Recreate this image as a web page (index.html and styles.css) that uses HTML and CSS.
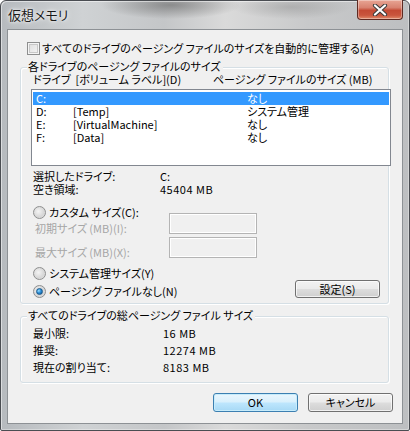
FILE: index.html
```html
<!DOCTYPE html>
<html lang="ja">
<head>
<meta charset="utf-8">
<link rel="stylesheet" href="styles.css">
</head>
<body>
<div class="window">
  <div class="titlebar">
    <span class="title">仮想メモリ</span>
    <div class="close">
      <svg width="16" height="12" viewBox="0 0 16 12"><path d="M3 1.5 L13 10.5 M13 1.5 L3 10.5" stroke="#3b3b3b" stroke-width="4.2" stroke-linecap="round"/><path d="M3 1.5 L13 10.5 M13 1.5 L3 10.5" stroke="#ffffff" stroke-width="2.2" stroke-linecap="round"/></svg>
    </div>
  </div>
  <div class="client">
    <div class="check-row"><span class="checkbox"></span><span>すべてのドライブのページング ファイルのサイズを自動的に管理する(A)</span></div>

    <div class="group g1">
      <span class="legend">各ドライブのページング ファイルのサイズ</span>
      <div class="list-head"><span class="col1">ドライブ&nbsp;&nbsp;[ボリューム ラベル](D)</span><span>ページング ファイルのサイズ (MB)</span></div>
      <div class="listbox">
        <div class="lrow sel"><span class="c1">C:</span><span class="c2"></span><span>なし</span></div>
        <div class="lrow"><span class="c1">D:</span><span class="c2">[Temp]</span><span>システム管理</span></div>
        <div class="lrow"><span class="c1">E:</span><span class="c2">[VirtualMachine]</span><span>なし</span></div>
        <div class="lrow"><span class="c1">F:</span><span class="c2">[Data]</span><span>なし</span></div>
      </div>
      <div class="info">
        <span>選択したドライブ:</span><span>C:</span>
        <span>空き領域:</span><span class="num">45404 MB</span>
      </div>
      <div class="custom">
        <div class="custom-left">
          <div class="radio-row"><span class="radio"></span><span>カスタム サイズ(C):</span></div>
          <div class="dis l1">初期サイズ (MB)(I):</div>
          <div class="dis l2">最大サイズ (MB)(X):</div>
        </div>
        <div class="custom-right">
          <div class="tbox"></div>
          <div class="tbox"></div>
        </div>
      </div>
      <div class="radio-row sys"><span class="radio"></span><span>システム管理サイズ(Y)</span></div>
      <div class="none-row">
        <div class="radio-row"><span class="radio on"></span><span>ページング ファイルなし(N)</span></div>
        <div class="btn set">設定(S)</div>
      </div>
    </div>

    <div class="group g2">
      <span class="legend">すべてのドライブの総ページング ファイル サイズ</span>
      <div class="totals">
        <span>最小限:</span><span class="num">16 MB</span>
        <span>推奨:</span><span class="num">12274 MB</span>
        <span>現在の割り当て:</span><span class="num">8183 MB</span>
      </div>
    </div>

    <div class="buttons">
      <div class="btn ok">OK</div>
      <div class="btn">キャンセル</div>
    </div>
  </div>
</div>
</body>
</html>
```

FILE: styles.css
```css
* { box-sizing: border-box; }
html, body { margin: 0; padding: 0; }
body {
  width: 410px; height: 431px; overflow: hidden;
  font-family: "Noto Sans CJK JP", "Noto Sans", sans-serif;
  font-size: 11px; line-height: 13px; color: #000;
  font-feature-settings: "palt";
  white-space: nowrap;
}
.window {
  width: 410px; height: 431px;
  border: 1px solid #4a4d52;
  border-radius: 6px 6px 2px 2px;
  padding: 0 6px 6px 6px;
  background:
    radial-gradient(ellipse 70px 14px at 170px 4px, rgba(90,90,90,0.55), rgba(90,90,90,0) 100%),
    radial-gradient(ellipse 60px 12px at 290px 6px, rgba(120,120,120,0.35), rgba(120,120,120,0) 100%),
    linear-gradient(to right, #b6babe 0%, #cfd2d4 20%, #c4c6c8 40%, #dadada 55%, #c8c9ca 75%, #bdbfc1 100%);
  display: flex; flex-direction: column;
  box-shadow: inset 1px 1px 0 rgba(255,255,255,0.5), inset -1px -1px 0 rgba(255,255,255,0.35);
}
.titlebar {
  height: 28px; flex: none;
  display: flex; justify-content: space-between; align-items: flex-start;
}
.title {
  margin: 6px 0 0 1px;
  font-size: 13px; line-height: 16px; color: #1a1a1a;
  text-shadow: 0 0 6px #fff, 0 0 3px #fff;
}
.close {
  margin-top: -1px;
  width: 46px; height: 20px;
  border: 1px solid #5e2a22;
  border-top: none;
  border-radius: 0 0 4px 4px;
  background: linear-gradient(to bottom, #e8a594 0%, #d88270 40%, #c44a34 55%, #c9553d 80%, #e08a6a 100%);
  box-shadow: inset 0 0 0 1px rgba(255,255,255,0.35);
  display: flex; align-items: center; justify-content: center;
}
.client {
  flex: 1;
  border: 1px solid #8d9195;
  background: #f0f0f0;
  display: flex; flex-direction: column;
  align-items: flex-start;
}
.check-row {
  margin: 12px 0 0 19px;
  display: flex; align-items: center; gap: 2px; height: 13px;
}
.checkbox {
  width: 13px; height: 13px; flex: none;
  border: 1px solid #8e8f8f;
  background: linear-gradient(135deg, #dcdcdc, #f6f6f6);
  box-shadow: inset 0 0 0 1px #f4f4f4, inset 0 0 0 2px #c8c8c8;
}
.group {
  position: relative;
  margin-left: 12px;
  width: 369px;
  border: 1px solid #d5dfe5;
  border-radius: 3px;
  box-shadow: inset 1px 1px 0 #fff, 1px 1px 0 #fff;
}
.legend {
  position: absolute; top: -8px; left: 6px;
  padding: 0 2px 0 1px;
  background: #f0f0f0;
  line-height: 13px;
}
.g1 { margin-top: 12px; padding: 5px 0 5px 0; }
.g2 { margin-top: 12px; padding: 10px 0 8px 0; }
.list-head { display: flex; padding-left: 12px; height: 13px; }
.list-head .col1 { width: 180px; }
.listbox {
  margin: 3px 0 0 10px;
  width: 360px; height: 77px;
  border: 1px solid #828790;
  background: #fff;
  padding: 2px 1px 0 1px;
}
.lrow { display: flex; height: 13px; padding-left: 3px; }
.lrow .c1 { width: 37px; }
.lrow .c2 { width: 174px; }
.lrow.sel { background: #3399ff; color: #fff; }
.info {
  margin: 4px 0 0 12px;
  display: grid; grid-template-columns: 127px auto;
}
.num { letter-spacing: 0.5px; }
.custom { display: flex; margin: 10px 0 0 12px; }
.custom-left { width: 136px; }
.custom-right { display: flex; flex-direction: column; gap: 3px; margin-top: 7px; }
.tbox {
  width: 88px; height: 21px;
  border: 1px solid #b4b4b4;
  box-shadow: inset 0 0 0 1px #fff;
  background: #f0f0f0;
}
.radio-row { display: flex; align-items: center; gap: 3px; height: 13px; }
.radio {
  width: 13px; height: 13px; flex: none; border-radius: 50%;
  border: 1px solid #8e8f8f;
  background: radial-gradient(circle at 40% 40%, #f4f4f4 0%, #d6d6d6 60%, #e8e8e8 100%);
  position: relative;
}
.radio.on::after {
  content: ""; position: absolute; left: 2px; top: 2px;
  width: 7px; height: 7px; border-radius: 50%;
  background: radial-gradient(circle at 35% 35%, #9de0ff 0%, #2d8fd8 45%, #0d4f8c 100%);
  border: 1px solid #1b5a8c;
  box-sizing: border-box;
}
.dis { color: #a6a6a6; padding-left: 2px; }
.l1 { margin-top: 3px; }
.l2 { margin-top: 11px; }
.sys { margin: 8px 0 0 12px; }
.none-row {
  margin: 4px 0 0 12px; width: 347px;
  display: flex; justify-content: space-between; align-items: center;
}
.btn {
  width: 85px; height: 19px;
  border: 1px solid #707070;
  border-radius: 3px;
  background: linear-gradient(to bottom, #f2f2f2 0%, #ebebeb 48%, #dddddd 52%, #cfcfcf 100%);
  box-shadow: inset 0 0 0 1px rgba(255,255,255,0.7);
  display: flex; align-items: center; justify-content: center;
  line-height: 13px;
}
.btn.set { height: 18px; margin-top: -4px; }
.btn.ok {
  border-color: #3c7fb1;
  background: linear-gradient(to bottom, #eaf6fd 0%, #d9f0fc 48%, #bee6fd 52%, #a7d9f5 100%);
  box-shadow: inset 0 0 0 1px #c7ecfb;
}
.totals {
  margin-left: 12px;
  display: grid; grid-template-columns: 130px auto; row-gap: 4px;
}
.buttons {
  margin: 10px 0 0 205px;
  display: flex; gap: 10px;
}
```
